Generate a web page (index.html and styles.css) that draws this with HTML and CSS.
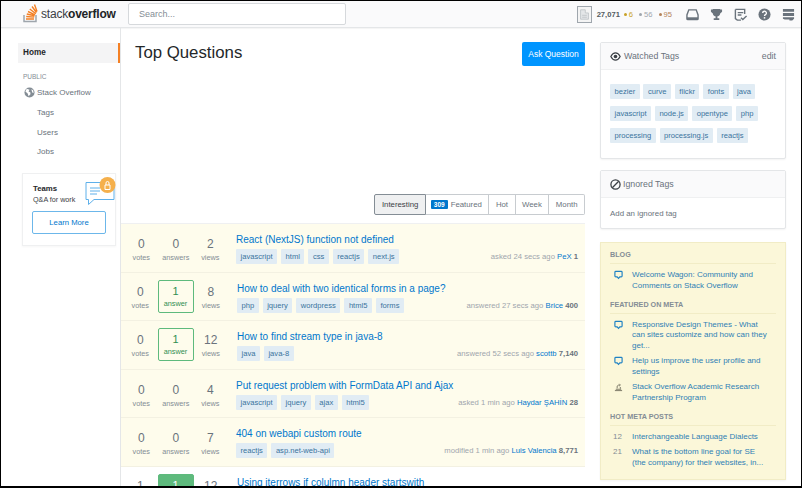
FILE: index.html
```html
<!DOCTYPE html>
<html lang="en">
<head>
<meta charset="utf-8">
<title>Top Questions</title>
<link rel="stylesheet" href="styles.css">
</head>
<body>
<div class="frame">
<header class="topbar">
  <a class="logo">
    <svg class="logo-mark" viewBox="0 0 15 20" width="15" height="20"><path d="M1 12v6.500h12V12" fill="none" stroke="#9fa6ad" stroke-width="1.500"/><path d="M3 16h8M3.200 13.500l8 .6M3.800 11l7.800 1.800M5 8.500l7 3.300M6.800 6l6 4.800M9 3.500l4.500 6M11.500 1.500l2.500 7" fill="none" stroke="#f48024" stroke-width="1.400"/></svg>
    <span class="logo-text">stack<b>overflow</b></span>
  </a>
  <div class="search">Search...</div>
  <div class="top-right">
    <span class="avatar"><svg viewBox="0 0 14 14" width="11" height="11"><path d="M2 1h6v4h4v8H2z" fill="#e4e6e8" stroke="#bbc0c4"/><path d="M4 8h6M4 10.500h6" stroke="#bbc0c4"/></svg></span>
    <span class="rep">27,071</span>
    <span class="badge gold">6</span><span class="badge silver">56</span><span class="badge bronze">95</span>
    <svg class="top-icon first" viewBox="0 0 14 13" width="13" height="13"><path d="M3 1.500h8l2 5.500v4a1 1 0 0 1-1 1H2a1 1 0 0 1-1-1V7z" fill="none" stroke="#6a737c" stroke-width="1.500"/><path d="M1 9.500h12V12H1z" fill="#6a737c"/></svg>
    <svg class="top-icon" viewBox="0 0 14 14" width="13" height="13"><path d="M3 1h8v4a4 4 0 0 1-8 0zM1 1.500h12V4l-2 2H3L1 4zM6 8h2v3h2v2H4v-2h2z" fill="#6a737c"/></svg>
    <svg class="top-icon" viewBox="0 0 14 14" width="13" height="13"><path d="M1.500 1.500h10v5M1.500 1.500v10l2 1.500h4M4 5h6M4 7.500h4" fill="none" stroke="#6a737c" stroke-width="1.500"/><path d="M7.500 10.500l2 2 4-4" fill="none" stroke="#6a737c" stroke-width="1.500"/></svg>
    <svg class="top-icon" viewBox="0 0 14 14" width="13" height="13"><circle cx="7" cy="7" r="6.500" fill="#6a737c"/><path d="M5 5.500a2 2 0 1 1 3 1.700c-.7.400-1 .8-1 1.500" fill="none" stroke="#fff" stroke-width="1.400"/><rect x="6.200" y="9.800" width="1.600" height="1.600" fill="#fff"/></svg>
    <svg class="top-icon" viewBox="0 0 14 14" width="13" height="13"><path d="M1 1h12v3H1zM1 5.500h12v3H1zM1 10h12v1.500l-2 2H8v-1H3l-2-1z" fill="#6a737c"/></svg>
  </div>
</header>
<div class="layout">
  <nav class="sidebar">
    <a class="nav-home">Home</a>
    <div class="nav-label">PUBLIC</div>
    <a class="nav-item">
      <svg class="globe" viewBox="0 0 12 12" width="11" height="11"><circle cx="6" cy="6" r="5.500" fill="#848d95"/><path d="M3 2l3 1-1 2 2 1v2L5 10 4 7 1.500 5zM8 2.500l2 1 .5 3-1.500-.5z" fill="#fff"/></svg>
      Stack Overflow</a>
    <a class="nav-sub">Tags</a>
    <a class="nav-sub">Users</a>
    <a class="nav-sub">Jobs</a>
    <div class="teams">
      <div class="teams-head">
        <div><div class="teams-title">Teams</div><div class="teams-sub">Q&amp;A for work</div></div>
        <svg class="teams-art" viewBox="0 0 31 30" width="31" height="30"><path d="M1 5.500h28v17H9l-5.500 5v-5H1z" fill="#fff" stroke="#5eb0ea" stroke-width="1"/><path d="M5 11h10M5 14h10M5 17h7" stroke="#5eb0ea"/><circle cx="22.500" cy="8" r="8" fill="#f5b04c"/><path d="M20 8h5v4.500h-5zM21 8V6a1.500 1.500 0 0 1 3 0v2" fill="none" stroke="#fff"/></svg>
      </div>
      <a class="learn">Learn More</a>
    </div>
  </nav>
  <main class="main">
    <div class="main-head">
      <h1>Top Questions</h1>
      <a class="ask">Ask Question</a>
    </div>
    <div class="tabs">
      <a class="tab active">Interesting</a>
      <a class="tab"><span class="count">309</span>Featured</a>
      <a class="tab">Hot</a>
      <a class="tab">Week</a>
      <a class="tab">Month</a>
    </div>
    <section class="questions">
      <article class="q watched">
        <div class="stats"><div class="stat"><b>0</b><span>votes</span></div><div class="stat"><b>0</b><span>answers</span></div><div class="stat"><b>2</b><span>views</span></div></div>
        <div class="q-body"><a class="q-title">React (NextJS) function not defined</a>
          <div class="q-foot"><div class="tags"><a class="tag">javascript</a><a class="tag">html</a><a class="tag">css</a><a class="tag">reactjs</a><a class="tag">next.js</a></div>
          <div class="meta">asked 24 secs ago <a>PeX</a> <b>1</b></div></div></div>
      </article>
      <article class="q watched boxed">
        <div class="stats"><div class="stat"><b>0</b><span>votes</span></div><div class="stat ans"><b>1</b><span>answer</span></div><div class="stat"><b>8</b><span>views</span></div></div>
        <div class="q-body"><a class="q-title">How to deal with two identical forms in a page?</a>
          <div class="q-foot"><div class="tags"><a class="tag">php</a><a class="tag">jquery</a><a class="tag">wordpress</a><a class="tag">html5</a><a class="tag">forms</a></div>
          <div class="meta">answered 27 secs ago <a>Brice</a> <b>400</b></div></div></div>
      </article>
      <article class="q watched boxed">
        <div class="stats"><div class="stat"><b>0</b><span>votes</span></div><div class="stat ans"><b>1</b><span>answer</span></div><div class="stat"><b>12</b><span>views</span></div></div>
        <div class="q-body"><a class="q-title">How to find stream type in java-8</a>
          <div class="q-foot"><div class="tags"><a class="tag">java</a><a class="tag">java-8</a></div>
          <div class="meta">answered 52 secs ago <a>scottb</a> <b>7,140</b></div></div></div>
      </article>
      <article class="q watched">
        <div class="stats"><div class="stat"><b>0</b><span>votes</span></div><div class="stat"><b>0</b><span>answers</span></div><div class="stat"><b>4</b><span>views</span></div></div>
        <div class="q-body"><a class="q-title">Put request problem with FormData API and Ajax</a>
          <div class="q-foot"><div class="tags"><a class="tag">javascript</a><a class="tag">jquery</a><a class="tag">ajax</a><a class="tag">html5</a></div>
          <div class="meta">asked 1 min ago <a>Haydar ŞAHİN</a> <b>28</b></div></div></div>
      </article>
      <article class="q watched">
        <div class="stats"><div class="stat"><b>0</b><span>votes</span></div><div class="stat"><b>0</b><span>answers</span></div><div class="stat"><b>7</b><span>views</span></div></div>
        <div class="q-body"><a class="q-title">404 on webapi custom route</a>
          <div class="q-foot"><div class="tags"><a class="tag">reactjs</a><a class="tag">asp.net-web-api</a></div>
          <div class="meta">modified 1 min ago <a>Luis Valencia</a> <b>8,771</b></div></div></div>
      </article>
      <article class="q boxed">
        <div class="stats"><div class="stat"><b>1</b><span>votes</span></div><div class="stat ans solved"><b>1</b><span>answer</span></div><div class="stat"><b>12</b><span>views</span></div></div>
        <div class="q-body"><a class="q-title">Using iterrows if colulmn header startswith</a></div>
      </article>
    </section>
  </main>
  <aside class="rail">
    <section class="card watched-card">
      <div class="card-head"><svg class="eye" viewBox="0 0 12 10" width="11" height="9"><path d="M.8 5C2.200 2.300 4 1 6 1s3.800 1.300 5.200 4C9.800 7.700 8 9 6 9S2.200 7.700.8 5z" fill="none" stroke="#3b4045" stroke-width="1.300"/><circle cx="6" cy="5" r="2" fill="#3b4045"/></svg><span class="card-title">Watched Tags</span><a class="edit">edit</a></div>
      <div class="card-body tag-wrap"><a class="tag">bezier</a><a class="tag">curve</a><a class="tag">flickr</a><a class="tag">fonts</a><a class="tag">java</a><a class="tag">javascript</a><a class="tag">node.js</a><a class="tag">opentype</a><a class="tag">php</a><a class="tag">processing</a><a class="tag">processing.js</a><a class="tag">reactjs</a></div>
    </section>
    <section class="card ignored-card">
      <div class="card-head"><svg class="ban" viewBox="0 0 12 12" width="11" height="11"><circle cx="6" cy="6" r="5" fill="none" stroke="#3b4045" stroke-width="1.400"/><path d="M2.500 9.500l7-7" stroke="#3b4045" stroke-width="1.400"/></svg><span class="card-title">Ignored Tags</span></div>
      <div class="card-body add-tag">Add an ignored tag</div>
    </section>
    <section class="notice">
      <h2>BLOG</h2>
      <div class="n-item"><svg class="n-ico" viewBox="0 0 10 10" width="9" height="10"><path d="M2 1h6a1 1 0 0 1 1 1v4a1 1 0 0 1-1 1H6.500L5 8.800 3.500 7H2a1 1 0 0 1-1-1V2a1 1 0 0 1 1-1z" fill="none" stroke="#1f82c4" stroke-width="1.300"/></svg><a>Welcome Wagon: Community and Comments on Stack Overflow</a></div>
      <h2>FEATURED ON META</h2>
      <div class="n-item"><svg class="n-ico" viewBox="0 0 10 10" width="9" height="10"><path d="M2 1h6a1 1 0 0 1 1 1v4a1 1 0 0 1-1 1H6.500L5 8.800 3.500 7H2a1 1 0 0 1-1-1V2a1 1 0 0 1 1-1z" fill="none" stroke="#1f82c4" stroke-width="1.300"/></svg><a>Responsive Design Themes - What can sites customize and how can they get...</a></div>
      <div class="n-item"><svg class="n-ico" viewBox="0 0 10 10" width="9" height="10"><path d="M2 1h6a1 1 0 0 1 1 1v4a1 1 0 0 1-1 1H6.500L5 8.800 3.500 7H2a1 1 0 0 1-1-1V2a1 1 0 0 1 1-1z" fill="none" stroke="#1f82c4" stroke-width="1.300"/></svg><a>Help us improve the user profile and settings</a></div>
      <div class="n-item"><svg class="n-ico" viewBox="0 0 10 10" width="9" height="10"><path d="M1 9h8M2 7.500h6M3.500 6.500V4l2-1.500M6 1.500l1 1.500-1.500 1M7 5v2" fill="none" stroke="#7d7a68" stroke-width="1.100"/></svg><a>Stack Overflow Academic Research Partnership Program</a></div>
      <h2>HOT META POSTS</h2>
      <div class="n-item"><span class="n-num">12</span><a>Interchangeable Language Dialects</a></div>
      <div class="n-item"><span class="n-num">21</span><a>What is the bottom line goal for SE (the company) for their websites, in...</a></div>
    </section>
  </aside>
</div>
</div>
</body>
</html>
```
FILE: styles.css
```css
* { box-sizing: border-box; }
html, body { margin: 0; height: 100%; background: #fff; }
body { font-family: "Liberation Sans", Arial, sans-serif; color: #3b4045; overflow: hidden; }
a { color: inherit; text-decoration: none; }
.frame { width: 802px; height: 488px; border: solid #000; border-width: 1px 1px 2px 1px; overflow: hidden; background: #fff; }
.topbar { height: 27px; background: #fafafb; border-bottom: 1px solid #e4e6e8; display: flex; align-items: center; padding-left: 22px; box-shadow: 0 1px 1px rgba(0,0,0,.04); }
.logo { width: 105px; display: flex; align-items: center; gap: 3px; }
.logo-mark { flex: none; margin-top: -3px; }
.logo-text { font-size: 12px; letter-spacing: -.2px; color: #3b4045; }
.logo-text b { color: #222426; }
.search { width: 218px; height: 22px; border: 1px solid #d6d9dc; border-radius: 2px; background: #fff; padding-left: 10px; font-size: 9px; line-height: 20px; color: #848d95; }
.top-right { margin-left: auto; display: flex; align-items: center; padding-right: 6px; }
.avatar { width: 15px; height: 17px; border: 1px solid #9fa6ad; background: #f4f4f4; display: flex; align-items: center; justify-content: center; margin-right: 5px; }
.rep { font-size: 7.600px; font-weight: 700; color: #535a60; margin-right: 4px; }
.badge { font-size: 7.600px; margin-right: 6px; display: inline-flex; align-items: center; }
.badge::before { content: ""; width: 3px; height: 3px; border-radius: 50%; margin-right: 2px; background: currentColor; }
.gold { color: #c9a227; }
.silver { color: #9fa6ad; }
.bronze { color: #b4835a; margin-right: 0; }
.top-icon { margin-left: 11px; flex: none; }
.top-icon.first { margin-left: 14px; }
.layout { display: flex; height: 458px; }
.sidebar { width: 120px; flex: none; border-right: 1px solid #e4e6e8; padding: 15px 0 0 17px; font-size: 8px; color: #6a737c; }
.nav-home { display: block; height: 20px; line-height: 20px; background: #f4f4f5; border-right: 2px solid #f48024; padding-left: 5px; font-weight: 700; font-size: 8.200px; color: #242729; }
.nav-label { font-size: 6.500px; color: #848d95; margin: 9px 0 0 5px; line-height: 10px; }
.nav-item { display: flex; align-items: center; gap: 2px; height: 21px; padding-left: 6px; color: #6a737c; }
.globe { flex: none; }
.nav-sub { display: block; height: 19.500px; line-height: 19.500px; padding-left: 19px; }
.teams { width: 94px; height: 73px; margin: 11px 0 0 4px; border: 1px solid #eff0f1; padding: 9px 0 0 10px; box-shadow: 0 1px 2px rgba(0,0,0,.04); position: relative; }
.teams-head { height: 26px; }
.teams-title { font-size: 7.800px; font-weight: 700; color: #242729; line-height: 11px; }
.teams-sub { font-size: 7.200px; line-height: 11px; color: #3b4045; }
.teams-art { position: absolute; right: -1px; top: 3px; }
.learn { display: block; width: 74px; height: 23px; margin: 2px 0 0 -1px; border: 1px solid #6cb7ea; border-radius: 2px; text-align: center; line-height: 21px; font-size: 7.700px; color: #0077cc; }
.main { width: 464px; flex: none; }
.main-head { display: flex; justify-content: space-between; height: 166px; padding: 12px 0 0 14px; }
h1 { margin: 0; font-size: 16.800px; line-height: 26px; font-weight: 400; color: #242729; }
.ask { width: 63px; height: 24px; margin-top: 2px; background: #0095ff; border-radius: 2px; color: #fff; font-size: 8.500px; line-height: 24px; text-align: center; }
.tabs { display: flex; justify-content: flex-end; height: 21px; }
.tab { border: 1px solid #c8ccd0; border-left-width: 0; padding: 0 6.500px; font-size: 7.800px; line-height: 19px; color: #6a737c; display: flex; align-items: center; }
.tab.active { border-left-width: 1px; background: #eff0f1; color: #3b4045; border-color: #848d95; border-radius: 2px 0 0 2px; }
.tab:last-child { border-radius: 0 2px 2px 0; }
.count { background: #0077cc; color: #fff; font-size: 6.500px; font-weight: 700; line-height: 9px; padding: 0 3px; border-radius: 1px; margin: 0 3px 0 -1.500px; }
.questions { margin-top: 8px; border-top: 1px solid #eff0f1; }
.q { height: 48.600px; border-bottom: 1px solid #f3f1e2; display: flex; padding-right: 7px; }
.q.watched { background: #fefcec; }
.q:last-child { border-bottom: 0; }
.stats { display: flex; width: 110px; flex: none; padding: 13px 0 0 3px; }
.stat { width: 34.500px; text-align: center; color: #6a737c; }
.stat b { display: block; font-weight: 400; font-size: 12px; line-height: 14px; }
.stat span { display: block; font-size: 7.300px; line-height: 13px; color: #848d95; }
.boxed .stats { padding: 7px 0 0 2px; }
.stat.ans { width: 36px; height: 33px; border: 1px solid #5eba7d; border-radius: 2px; padding-top: 4px; }
.stat.ans b { font-size: 11px; line-height: 13px; color: #2f8f52; }
.stat.ans span { color: #2f8f52; line-height: 11px; }
.boxed .stat:first-child, .boxed .stat:last-child { padding-top: 5px; }
.stat.solved { background: #5eba7d; }
.stat.solved b { color: #fff; }
.q-body { flex: 1; min-width: 0; padding: 9px 0 0 5px; }
.boxed .q-body { padding-left: 6px; }
.q-title { display: block; font-size: 10px; line-height: 14px; color: #0077cc; }
.q-foot { display: flex; justify-content: space-between; align-items: center; margin-top: 2px; }
.tags { display: flex; gap: 4px; }
.tag { display: inline-block; height: 15px; background: #e1ecf4; color: #39739d; font-size: 7.600px; line-height: 15px; padding: 0 4.500px; border-radius: 1px; white-space: nowrap; }
.meta { font-size: 7.700px; color: #9fa6ad; white-space: nowrap; }
.meta a { color: #0077cc; }
.meta b { color: #6a737c; }
.rail { width: 186px; flex: none; margin-left: 15px; padding-top: 14px; }
.card { border: 1px solid #e4e6e8; border-radius: 2px; box-shadow: 0 1px 2px rgba(0,0,0,.05); background: #fff; }
.watched-card { margin-bottom: 11px; }
.ignored-card { margin-bottom: 13px; }
.card-head { height: 27px; background: #fafafb; border-bottom: 1px solid #eff0f1; display: flex; align-items: center; padding: 0 9px; font-size: 8.800px; color: #6a737c; }
.eye { margin-right: 3px; }
.ban { margin-right: 2px; }
.edit { margin-left: auto; }
.tag-wrap { display: flex; flex-wrap: wrap; gap: 7px 3.800px; padding: 14px 9px 15px; }
.add-tag { font-size: 7.900px; color: #6a737c; padding: 11px 9px 0; height: 30px; }
.notice { background: #fbf7d9; border: 1px solid #f1ecc6; height: 238px; padding: 7px 9px; box-shadow: 0 1px 2px rgba(0,0,0,.05); }
.notice h2 { margin: 8.500px 0 6px; padding-bottom: 3px; font-size: 7.200px; line-height: 10px; font-weight: 700; color: #848d95; border-bottom: 1px solid #f1ecc6; }
.notice h2:first-child { margin-top: 0; }
.n-item { display: flex; font-size: 8px; line-height: 10.500px; color: #2f7fb5; margin-bottom: 5px; }
.n-item a { flex: 1; padding-right: 8px; }
.n-ico { flex: none; margin: 0 9px 0 4px; }
.n-num { flex: none; width: 22px; padding-left: 3px; color: #848d95; }
```
